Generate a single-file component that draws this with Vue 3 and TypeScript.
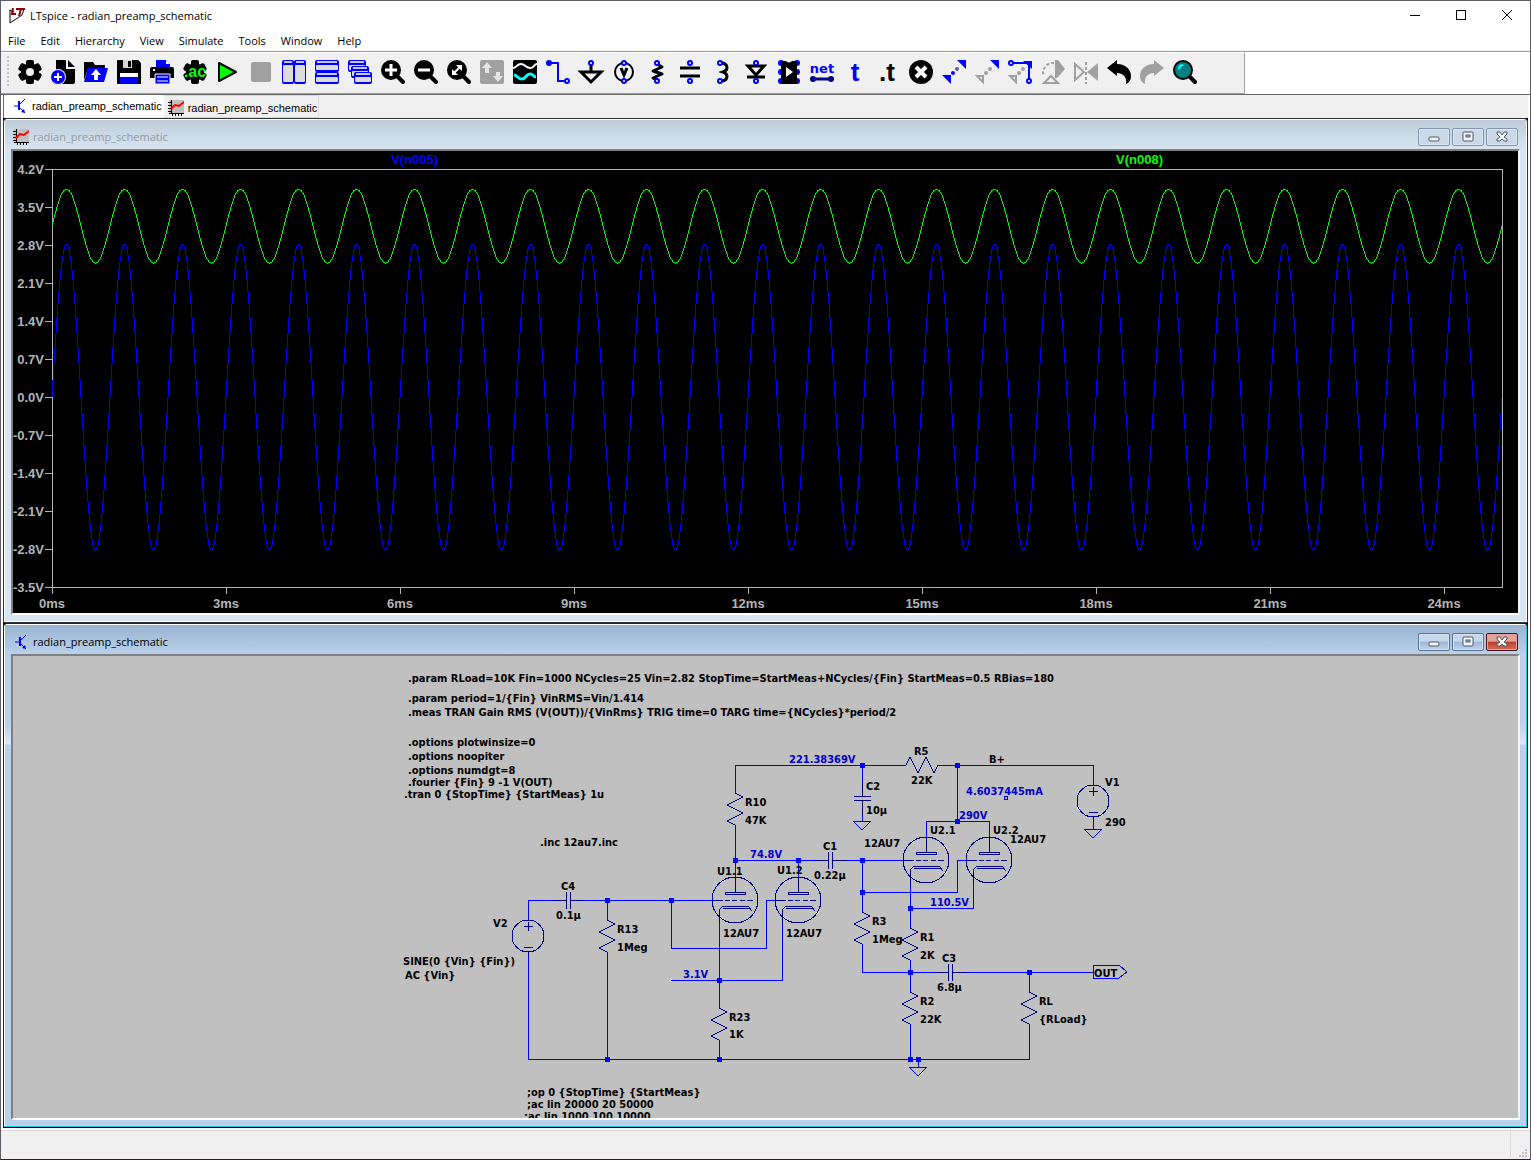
<script setup lang="ts">
import { computed, onBeforeUnmount, onMounted, ref } from 'vue'

interface Tool { name: string; art: string }
interface Label { x: number; y: number; text: string; kind?: string }
type Point = [number, number]

const documentName = 'radian_preamp_schematic'
const menus = ['File', 'Edit', 'Hierarchy', 'View', 'Simulate', 'Tools', 'Window', 'Help']

/* ---------- toolbar artwork, 24x24 grid ---------- */
const B = '#0000ff'
const G = '#a0a0a0'

const gear = `<g fill="#000"><circle cx="12" cy="12" r="9"/>
  <rect x="8" y="0" width="8" height="24" rx="2"/>
  <rect x="8" y="0" width="8" height="24" rx="2" transform="rotate(60 12 12)"/>
  <rect x="8" y="0" width="8" height="24" rx="2" transform="rotate(120 12 12)"/></g>`

const pin = (x: number, y: number) =>
  `<circle cx="${x}" cy="${y}" r="2" fill="#fff" stroke="${B}" stroke-width="2"/>`

const pane = (x: number, y: number, w: number, h: number) =>
  `<rect x="${x}" y="${y}" width="${w}" height="${h}" rx="2" fill="${B}"/>
   <rect x="${x + 2}" y="${y + 1}" width="${w - 4}" height="2" fill="#c8c8ff"/>
   <rect x="${x + 1}" y="${y + 5}" width="${w - 2}" height="${h - 7}" rx="1" fill="#dcdcdc"/>`

const lens = (inner: string) =>
  `<path d="M16 16L22 22" stroke="#000" stroke-width="4" stroke-linecap="round"/>
   <circle cx="10" cy="10" r="10" fill="#000"/>${inner}`

const dots = (first: string, second: string) =>
  `<circle cx="15" cy="9" r="2" fill="${first}"/><circle cx="11" cy="13" r="2" fill="${second}"/>`

const tools: Tool[] = [
  { name: 'Settings', art: `${gear}<circle cx="12" cy="12" r="4" fill="#f0f0f0"/>` },
  { name: 'New schematic', art: `<path d="M5 0H15V9H24V22Q24 24 22 24H5Z" fill="#000"/><path d="M17 0L24 7H17Z" fill="#000"/>
    <circle cx="7" cy="17" r="8" fill="#f0f0f0"/><circle cx="7" cy="17" r="7" fill="${B}"/><path d="M7 13V21M3 17H11" stroke="#fff" stroke-width="2"/>` },
  { name: 'Open', art: `<path d="M0 2H9L11 5H21V9H4L0 20Z" fill="#000"/><path d="M4 8H24L20 22H0Z" fill="${B}"/>
    <path d="M12 9L17 15H14V20H10V15H7Z" fill="#fff"/>` },
  { name: 'Save', art: `<path d="M1 0H21L24 3V24H1Q0 24 0 23V1Q0 0 1 0Z" fill="#000"/><path d="M6 0H15V8H6Z" fill="#d8d8d8"/>
    <path d="M11 1H14V7H11Z" fill="#000"/><path d="M3 13H21V17H3Z" fill="#fff"/><path d="M3 17H21V23H3Z" fill="${B}"/>` },
  { name: 'Print', art: `<path d="M6 0H16L20 4V8H6Z" fill="${B}"/><path d="M16 0V4H20" fill="#fff"/>
    <path d="M2 7H22Q24 7 24 9V18H0V9Q0 7 2 7Z" fill="#000"/><path d="M3 10H5" stroke="#fff" stroke-width="2"/>
    <path d="M5 14H20V24H5Z" fill="${B}" stroke="#f0f0f0"/><path d="M7 17H18M7 21H18" stroke="#fff"/>` },
  { name: 'Configure analysis', art: `${gear}<text x="12" y="17" text-anchor="middle" class="glyph-ac">.ac</text>` },
  { name: 'Run', art: `<path d="M3 3V21L20 12Z" fill="#00ff00" stroke="#000" stroke-width="2" stroke-linejoin="round"/>` },
  { name: 'Stop', art: `<rect x="2" y="2" width="20" height="20" rx="2" fill="${G}"/>` },
  { name: 'Tile vertically', art: pane(0, 0, 12, 24) + pane(12, 0, 12, 24) },
  { name: 'Tile horizontally', art: pane(0, 0, 24, 12) + pane(0, 12, 24, 12) },
  { name: 'Cascade', art: pane(0, 0, 18, 12) + pane(3, 6, 18, 12) + pane(6, 12, 18, 12) },
  { name: 'Zoom in', art: lens('<path d="M10 4V16M4 10H16" stroke="#fff" stroke-width="3"/>') },
  { name: 'Zoom out', art: lens('<path d="M4 10H16" stroke="#fff" stroke-width="3"/>') },
  { name: 'Zoom to fit', art: lens('<path d="M15 5V11L9 5ZM5 15V9L11 15Z" fill="#fff"/><path d="M7 13L13 7" stroke="#fff" stroke-width="2"/>') },
  { name: 'Autorange', art: `<rect width="24" height="24" rx="2" fill="${G}"/><path d="M7 2L12 8H9V13H5V8H2ZM18 22L13 16H16V12H20V16H23Z" fill="#e4e4e4"/>` },
  { name: 'Waveform', art: `<rect width="24" height="24" rx="2" fill="#000"/><path d="M0 8C3 8 4 4 8 4S13 8 17 8 21 4 24 4" fill="none" stroke="#fff" stroke-width="2"/>
    <path d="M1 15C4 15 5 19 9 19S13 14 17 14 20 17 23 17" fill="none" stroke="#00ffff" stroke-width="3"/>` },
  { name: 'Wire', art: `<path d="M3 3H12V21H19" fill="none" stroke="${B}" stroke-width="2"/><circle cx="3" cy="3" r="3" fill="${B}"/>${pin(21, 21)}` },
  { name: 'Ground', art: `<path d="M12 5V12M2 12H22L12 22Z" fill="none" stroke="#000" stroke-width="3"/>${pin(12, 3)}` },
  { name: 'Voltage source', art: `<circle cx="12" cy="12" r="9" fill="none" stroke="#000" stroke-width="2"/><path d="M9 8L12 15L15 8" fill="none" stroke="#000" stroke-width="3"/>${pin(12, 3)}${pin(12, 21)}` },
  { name: 'Resistor', art: `<path d="M12 4L17 7L8 11L17 14L8 18L12 20" fill="none" stroke="#000" stroke-width="3" stroke-linejoin="round"/>${pin(12, 3)}${pin(12, 21)}` },
  { name: 'Capacitor', art: `<path d="M2 8H22M2 16H22" stroke="#000" stroke-width="3"/>${pin(12, 3)}${pin(12, 21)}` },
  { name: 'Inductor', art: `<path d="M10 3C17 3 18 10 12 12C18 14 17 21 10 21M12 12H14" fill="none" stroke="#000" stroke-width="3"/>${pin(9, 3)}${pin(9, 21)}` },
  { name: 'Diode', art: `<path d="M4 6H20L12 15Z" fill="none" stroke="#000" stroke-width="3"/><path d="M3 17H21" stroke="#000" stroke-width="3"/>${pin(12, 3)}${pin(12, 21)}` },
  { name: 'Component', art: `<g fill="${B}"><circle cx="4" cy="3" r="3"/><circle cx="4" cy="12" r="3"/><circle cx="4" cy="21" r="3"/><circle cx="20" cy="3" r="3"/><circle cx="20" cy="12" r="3"/><circle cx="20" cy="21" r="3"/></g>
    <path d="M4 1H9Q12 4 15 1H20V24H4Z" fill="#000"/><path d="M9 7L16 12L9 17Z" fill="#fff"/>` },
  { name: 'Net name', art: `<text x="12" y="13" text-anchor="middle" class="glyph-net">net</text><path d="M3 19H21" stroke="#00008b" stroke-width="3"/><circle cx="3" cy="19" r="3" fill="#00008b"/><circle cx="21" cy="19" r="3" fill="#00008b"/>` },
  { name: 'Text', art: `<text x="12" y="21" text-anchor="middle" class="glyph-t">t</text>` },
  { name: 'SPICE directive', art: `<text x="11" y="21" text-anchor="middle" class="glyph-t dark">.t</text>` },
  { name: 'Delete', art: `<circle cx="12" cy="12" r="12" fill="#000"/><path d="M7 7L17 17M17 7L7 17" stroke="#fff" stroke-width="4"/>` },
  { name: 'Move', art: `<path d="M15 0H24V9ZM0 15H9V24Z" fill="${B}"/>${dots('#6060a0', B)}` },
  { name: 'Duplicate', art: `<path d="M15 0H24V9Z" fill="${B}"/><path d="M2 16H8V22Z" fill="none" stroke="${G}" stroke-width="2"/>${dots(G, G)}` },
  { name: 'Drag', art: `<path d="M2 16H8V22Z" fill="none" stroke="${G}" stroke-width="2"/>${dots(G, G)}<path d="M5 3H21V19" fill="none" stroke="${B}" stroke-width="2"/><path d="M15 1H24V9Z" fill="${B}"/>${pin(3, 3)}${pin(21, 21)}` },
  { name: 'Rotate', art: `<path d="M14 0H17L24 9L16 18H14Z" fill="${G}"/><path d="M13 3A10 10 0 0 0 2 13V16" fill="none" stroke="${G}" stroke-width="2" stroke-dasharray="3 2"/><path d="M3 23L10 16L17 23Z" fill="none" stroke="${G}" stroke-width="2"/>` },
  { name: 'Mirror', art: `<path d="M24 3V21L13 12Z" fill="${G}"/><path d="M1 4V20L10 12Z" fill="none" stroke="${G}" stroke-width="2"/><path d="M12 2V24" stroke="${G}" stroke-width="2" stroke-dasharray="3 2"/>` },
  { name: 'Undo', art: `<path d="M0 8L10 0V4C19 4 24 10 24 16Q24 22 19 24C20 18 17 13 10 13V16Z" fill="#000"/>` },
  { name: 'Redo', art: `<path d="M24 8L14 0V4C5 4 0 10 0 16Q0 22 5 24C4 18 7 13 14 13V16Z" fill="${G}"/>` },
  { name: 'Find', art: `<path d="M17 17L22 22" stroke="#000" stroke-width="4" stroke-linecap="round"/><circle cx="10" cy="10" r="9" fill="#008080" stroke="#000" stroke-width="2"/><path d="M5 9Q5 5 9 4L11 5Q7 7 6 10Z" fill="#00ffff"/>` },
]

const captionArt = {
  plot: `<rect x="1" width="15" height="14" fill="#c0c0c0"/><path d="M3 0V14M1 13H16M0 2H3M0 5H3M0 8H3M0 11H3M4 13V16M7 13V16M10 13V16M13 13V16" stroke="#000" shape-rendering="crispEdges"/><path d="M3 9L7 5L11 6L16 2" fill="none" stroke="#f00" stroke-width="2"/>`,
  schematic: `<path d="M2 8H7M7 7L13 1M7 9L13 15" fill="none" stroke="#00f"/><path d="M7 3V12" stroke="#00f" stroke-width="2"/><path d="M13 15L9 14L12 11Z" fill="#00f"/>`,
}

/* ---------- waveform plot ---------- */
let plotHost: HTMLElement | null = null
const keepPlotHost = (el: unknown) => { plotHost = el as HTMLElement | null }
const plotSize = ref({ width: 1505, height: 462 })
const margin = { left: 39, top: 18, right: 15, bottom: 26 }
const volts = { min: -3.5, max: 4.2, step: 0.7 }
const time = { end: 25, step: 3 }

const right = computed(() => plotSize.value.width - margin.right - 1)
const bottom = computed(() => plotSize.value.height - margin.bottom)
const toX = (ms: number) => margin.left + (ms / time.end) * (right.value - margin.left)
const toY = (v: number) => margin.top + ((volts.max - v) / (volts.max - volts.min)) * (bottom.value - margin.top)

const yTicks = computed(() =>
  Array.from({ length: 12 }, (_, i) => {
    const v = volts.max - i * volts.step
    return { y: Math.round(toY(v)), text: `${(Math.round(v * 10) / 10 || 0).toFixed(1)}V` }
  }))
const xTicks = computed(() =>
  Array.from({ length: 9 }, (_, i) => ({ x: Math.round(toX(i * time.step)), text: `${i * time.step}ms` })))

const trace = (mean: number, amplitude: number) => {
  const points: string[] = []
  for (let x = margin.left; x <= right.value; x += 1) {
    const ms = ((x - margin.left) / (right.value - margin.left)) * time.end
    points.push(`${x},${Math.round(toY(mean + amplitude * Math.sin(2 * Math.PI * ms)))}`)
  }
  return points.join(' ')
}
const traces = computed(() => [
  { name: 'V(n005)', color: '#0000ff', at: 0.25, points: trace(0, 2.82) },
  { name: 'V(n008)', color: '#00ff00', at: 0.75, points: trace(3.15, 0.68) },
])

let observer: ResizeObserver | undefined
onMounted(() => {
  if (!plotHost) return
  observer = new ResizeObserver(([entry]) => {
    plotSize.value = { width: Math.round(entry.contentRect.width), height: Math.round(entry.contentRect.height) }
  })
  observer.observe(plotHost)
})
onBeforeUnmount(() => observer?.disconnect())

/* ---------- schematic sheet ---------- */
const sheetOrigin = 'translate(-13 -656)'

const wires: string[] = [
  'M735 793V765H906', 'M938 765H1093V785', 'M862 765V782', 'M862 815V821', 'M957 765V821', 'M926 837V821H989V837',
  'M735 825V877', 'M735 860H815', 'M798 860V877', 'M846 860H903', 'M862 860V912', 'M862 892H957V860H966',
  'M862 944V972H935', 'M910 883V928', 'M910 908H973V883', 'M910 960V992', 'M965 972H1093', 'M1029 972V992',
  'M1029 1024V1059H528V952', 'M910 1024V1059', 'M918 1059V1067', 'M528 920V900H553', 'M583 900H712', 'M607 900V920',
  'M607 952V1059', 'M671 900V948H766V900H775', 'M719 923V1008', 'M671 980H782V923', 'M719 1040V1059', 'M1093 820V829',
  'M853 821H871L862 830Z', 'M1084 829H1102L1093 838Z', 'M909 1067H927L918 1076Z',
  'M1093 965H1119L1127 972L1119 978H1093Z', 'M1004 796H1007V799H1004Z',
]

const zigzag = (x: number, y: number) => `M${x} ${y}l8 4l-16 8l16 8l-16 8l8 4`
const capacitor = (x: number, y: number) =>
  `M${x - 15} ${y}h13M${x - 2} ${y - 8}v17M${x + 2} ${y - 8}v17M${x + 2} ${y}h14`
const source = (x: number, y: number) =>
  `M${x - 16} ${y}a16 16 0 1 0 32 0a16 16 0 1 0 -32 0M${x - 4} ${y - 10}h9M${x} ${y - 14}v9M${x - 4} ${y + 11}h9M${x} ${y + 16}v4`
const triode = (x: number, y: number) =>
  `M${x - 23} ${y}a23 23 0 1 0 46 0a23 23 0 1 0 -46 0M${x} ${y - 23}v15M${x - 10} ${y - 8}h20v2h-20z` +
  `M${x - 23} ${y}h11M${x - 10} ${y}h5M${x - 3} ${y}h5M${x + 5} ${y}h5M${x + 12} ${y}h6` +
  `M${x + 17} ${y + 11}l-4 -5h-25l-4 4v13M${x - 12} ${y + 8}h26`

const parts: string[] = [
  zigzag(735, 793), zigzag(862, 912), zigzag(910, 928), zigzag(910, 992), zigzag(1029, 992), zigzag(719, 1008), zigzag(607, 920),
  'M906 765l4 -8l8 16l8 -16l8 16l4 -8',
  capacitor(830, 860), capacitor(950, 972), capacitor(568, 900),
  'M862 782V796M854 796H871M854 800H871M862 800V815',
  source(528, 936), source(1093, 801),
  triode(735, 900), triode(798, 900), triode(926, 860), triode(989, 860),
]

const junctions: Point[] = [
  [862, 765], [957, 765], [957, 821], [735, 860], [798, 860], [862, 860], [862, 892], [910, 908], [910, 972],
  [1029, 972], [607, 900], [671, 900], [719, 980], [607, 1059], [719, 1059], [910, 1059], [918, 1059],
]

const labels: Label[] = [
  { x: 408, y: 682, text: '.param RLoad=10K Fin=1000 NCycles=25 Vin=2.82 StopTime=StartMeas+NCycles/{Fin} StartMeas=0.5 RBias=180' },
  { x: 408, y: 702, text: '.param period=1/{Fin} VinRMS=Vin/1.414' },
  { x: 408, y: 716, text: '.meas TRAN Gain RMS (V(OUT))/{VinRms} TRIG time=0 TARG time={NCycles}*period/2' },
  { x: 408, y: 746, text: '.options plotwinsize=0' },
  { x: 408, y: 760, text: '.options noopiter' },
  { x: 408, y: 774, text: '.options numdgt=8' },
  { x: 408, y: 786, text: '.fourier {Fin} 9 -1 V(OUT)' },
  { x: 404, y: 798, text: '.tran 0 {StopTime} {StartMeas} 1u' },
  { x: 540, y: 846, text: '.inc 12au7.inc' },
  { x: 789, y: 763, text: '221.38369V', kind: 'probe' },
  { x: 966, y: 795, text: '4.6037445mA', kind: 'probe' },
  { x: 959, y: 819, text: '290V', kind: 'probe' },
  { x: 750, y: 858, text: '74.8V', kind: 'probe' },
  { x: 930, y: 906, text: '110.5V', kind: 'probe' },
  { x: 683, y: 978, text: '3.1V', kind: 'probe' },
  { x: 745, y: 806, text: 'R10' }, { x: 745, y: 824, text: '47K' },
  { x: 914, y: 755, text: 'R5' }, { x: 911, y: 784, text: '22K' },
  { x: 866, y: 790, text: 'C2' }, { x: 866, y: 814, text: '10µ' },
  { x: 989, y: 763, text: 'B+' },
  { x: 1105, y: 786, text: 'V1' }, { x: 1105, y: 826, text: '290' },
  { x: 930, y: 834, text: 'U2.1' }, { x: 864, y: 847, text: '12AU7' },
  { x: 993, y: 834, text: 'U2.2' }, { x: 1010, y: 843, text: '12AU7' },
  { x: 823, y: 850, text: 'C1' }, { x: 814, y: 879, text: '0.22µ' },
  { x: 717, y: 875, text: 'U1.1' }, { x: 723, y: 937, text: '12AU7' },
  { x: 777, y: 874, text: 'U1.2' }, { x: 786, y: 937, text: '12AU7' },
  { x: 872, y: 925, text: 'R3' }, { x: 872, y: 943, text: '1Meg' },
  { x: 920, y: 941, text: 'R1' }, { x: 920, y: 959, text: '2K' },
  { x: 942, y: 962, text: 'C3' }, { x: 937, y: 991, text: '6.8µ' },
  { x: 920, y: 1005, text: 'R2' }, { x: 920, y: 1023, text: '22K' },
  { x: 1039, y: 1005, text: 'RL' }, { x: 1039, y: 1023, text: '{RLoad}' },
  { x: 1094, y: 977, text: 'OUT' },
  { x: 561, y: 890, text: 'C4' }, { x: 556, y: 919, text: '0.1µ' },
  { x: 617, y: 933, text: 'R13' }, { x: 617, y: 951, text: '1Meg' },
  { x: 493, y: 927, text: 'V2' },
  { x: 403, y: 965, text: 'SINE(0 {Vin} {Fin})' }, { x: 405, y: 979, text: 'AC {Vin}' },
  { x: 729, y: 1021, text: 'R23' }, { x: 729, y: 1038, text: '1K' },
  { x: 527, y: 1096, text: ';op 0 {StopTime} {StartMeas}' },
  { x: 527, y: 1108, text: ';ac lin 20000 20 50000' },
  { x: 524, y: 1120, text: ';ac lin 1000 100 10000' },
]

const children = [
  { id: 'plot', active: false, art: captionArt.plot },
  { id: 'schematic', active: true, art: captionArt.schematic },
]
</script>

<template>
  <div class="app">
    <header class="titlebar">
      <svg class="app-icon" viewBox="0 0 16 16" width="16" height="16" aria-hidden="true">
        <path d="M1 15V2L5 4M1 15L13 7L15 1" fill="none" stroke="#000" />
        <path d="M4 0L3 6H7" fill="none" stroke="#8b0000" stroke-width="2" />
        <path d="M7 1H16M12 1L10 8" fill="none" stroke="#8b0000" stroke-width="2" />
      </svg>
      <h1>LTspice - {{ documentName }}</h1>
      <div class="window-controls">
        <button type="button" aria-label="Minimize"><svg width="10" height="10"><path d="M0 5H10" /></svg></button>
        <button type="button" aria-label="Maximize"><svg width="10" height="10"><rect width="9" height="9" /></svg></button>
        <button type="button" aria-label="Close"><svg width="10" height="10"><path d="M0 0L10 10M10 0L0 10" class="smooth" /></svg></button>
      </div>
    </header>

    <nav class="menubar" aria-label="Main menu">
      <button v-for="menu in menus" :key="menu" type="button">{{ menu }}</button>
    </nav>

    <div class="rebar">
      <div class="toolbar" role="toolbar" aria-label="Tools">
        <span class="grip"></span>
        <button v-for="tool in tools" :key="tool.name" type="button" :aria-label="tool.name">
          <svg viewBox="0 0 24 24" width="24" height="24" v-html="tool.art"></svg>
        </button>
      </div>
    </div>

    <div class="tabs" role="tablist">
      <button type="button" role="tab" aria-selected="true" class="tab selected">
        <svg viewBox="0 0 16 16" width="16" height="16" v-html="captionArt.schematic"></svg>{{ documentName }}
      </button>
      <button type="button" role="tab" aria-selected="false" class="tab">
        <svg viewBox="0 0 16 16" width="16" height="16" v-html="captionArt.plot"></svg>{{ documentName }}
      </button>
    </div>

    <main class="workspace">
      <section v-for="child in children" :key="child.id" class="child" :class="{ active: child.active }">
        <header class="caption">
          <svg viewBox="0 0 16 16" width="16" height="16" v-html="child.art"></svg>
          <h2>{{ documentName }}</h2>
          <div class="caption-buttons">
            <button type="button" aria-label="Minimize">
              <svg width="12" height="12"><rect x="1" y="6" width="10" height="4" rx="1" /></svg>
            </button>
            <button type="button" aria-label="Restore">
              <svg width="12" height="12"><rect x="1" y="1" width="10" height="9" rx="1" /><rect x="4" y="4" width="4" height="2" class="hole" /></svg>
            </button>
            <button type="button" aria-label="Close" class="close">
              <svg width="12" height="12"><path d="M1 1H4L6 4L8 1H11V3L8 6L11 8V10H8L6 8L4 10H1V8L4 6L1 3Z" /></svg>
            </button>
          </div>
        </header>

        <div v-if="child.id === 'plot'" class="client plot">
          <div :ref="keepPlotHost" class="plot-host">
            <svg class="canvas" role="img" aria-label="Transient analysis waveforms">
              <g class="axes">
                <rect :x="margin.left" :y="margin.top" :width="right - margin.left" :height="bottom - margin.top" />
                <path v-for="t in yTicks" :key="t.text" :d="`M${margin.left - 7} ${t.y}h7`" />
                <path v-for="t in xTicks" :key="t.text" :d="`M${t.x} ${bottom}v7`" />
              </g>
              <polyline v-for="t in traces" :key="t.name" class="trace" :points="t.points" :stroke="t.color" />
              <g class="scale">
                <text v-for="t in yTicks" :key="t.text" :x="margin.left - 8" :y="t.y + 5" text-anchor="end">{{ t.text }}</text>
                <text v-for="t in xTicks" :key="t.text" :x="t.x" :y="bottom + 21" text-anchor="middle">{{ t.text }}</text>
                <text v-for="t in traces" :key="t.name" :x="toX(time.end * t.at)" y="13" text-anchor="middle" :fill="t.color">{{ t.name }}</text>
              </g>
            </svg>
          </div>
        </div>

        <div v-else class="client sheet">
          <svg class="canvas" role="img" aria-label="Preamp schematic">
            <g :transform="sheetOrigin">
              <path v-for="d in wires" :key="d" class="wire" :d="d" />
              <path v-for="d in parts" :key="d" class="part" :d="d" />
              <rect v-for="[x, y] in junctions" :key="`${x}-${y}`" class="junction" :x="x - 2" :y="y - 2" width="5" height="5" />
              <text v-for="l in labels" :key="`${l.x}-${l.y}`" :x="l.x" :y="l.y" :class="l.kind">{{ l.text }}</text>
            </g>
          </svg>
        </div>
      </section>
    </main>

    <footer class="statusbar">
      <span class="status-text"></span>
      <svg class="size-grip" width="12" height="12" viewBox="0 0 12 12" aria-hidden="true">
        <path d="M8 2h2v2h-2zM5 5h2v2h-2zM8 5h2v2h-2zM2 8h2v2h-2zM5 8h2v2h-2zM8 8h2v2h-2z" />
      </svg>
    </footer>
  </div>
</template>

<style>
body { margin: 0; background: #fff; }
</style>

<style scoped>
* { box-sizing: border-box; }
.app {
  display: flex;
  flex-direction: column;
  height: 100vh;
  min-height: 600px;
  overflow: hidden;
  border: 1px solid #5f5c66;
  border-bottom-color: #231f2b;
  background: #fff;
  font: 11px/16px "Open Sans", "Noto Sans", sans-serif;
  color: #000;
}
button {
  margin: 0;
  padding: 0;
  border: 0;
  background: none;
  font: inherit;
  color: inherit;
}
h1, h2 { margin: 0; font: inherit; }
svg { display: block; flex: none; }

.titlebar { display: flex; align-items: center; flex: none; height: 30px; padding-left: 8px; }
.app-icon { margin-right: 5px; }
.titlebar h1 { flex: 1; }
.window-controls { display: flex; align-self: flex-start; }
.window-controls button { display: flex; justify-content: center; align-items: center; width: 46px; height: 28px; }
.window-controls svg { overflow: visible; fill: none; stroke: #000; shape-rendering: crispEdges; }
.smooth { shape-rendering: auto; }

.menubar { display: flex; align-items: center; gap: 1px; flex: none; height: 20px; border-bottom: 1px solid #f0f0f0; }
.menubar button { padding: 0 7px; }

.rebar {
  display: flex;
  flex: none;
  height: 44px;
  border-top: 1px solid #a0a0a0;
  border-bottom: 1px solid #696969;
}
.toolbar {
  display: flex;
  align-items: center;
  height: 42px;
  padding: 0 43px 2px 0;
  border-top: 1px solid #fff;
  border-right: 1px solid #a0a0a0;
  border-bottom: 1px solid #a0a0a0;
  background: #f0f0f0;
}
.toolbar button { display: flex; justify-content: center; width: 33px; }
.toolbar svg { overflow: visible; }
.grip {
  width: 2px;
  height: 32px;
  margin: 0 4px 0 6px;
  background: repeating-linear-gradient(#c4c4c4 0 2px, #f0f0f0 2px 4px);
}
.toolbar :deep(.glyph-ac) { font: 700 16px "Liberation Sans", sans-serif; fill: #00ff00; }
.toolbar :deep(.glyph-net) { font: 700 13px "DejaVu Sans", sans-serif; fill: #0000ff; }
.toolbar :deep(.glyph-t) { font: 700 26px "Liberation Sans", sans-serif; fill: #0000ff; }
.toolbar :deep(.dark) { fill: #000; }

.tabs {
  display: flex;
  align-items: flex-start;
  flex: none;
  height: 23px;
  margin: 0 2px;
  border-left: 1px solid #696969;
  background: #f0f0f0;
  font: 11px/16px "Liberation Sans", sans-serif;
}
.tab { display: flex; align-items: center; height: 23px; padding: 2px 1px 0 4px; border: 1px solid #d9d9d9; border-left: 0; }
.tab svg { margin-right: 4px; }
.tab.selected { height: 22px; padding: 0 1px 0 8px; border-color: #fff; background: #fff; }

.workspace { display: flex; flex-direction: column; flex: 1; min-height: 0; margin: 0 2px; background: #000; }
.child {
  display: flex;
  flex-direction: column;
  flex: 1 1 0;
  min-height: 0;
  padding: 0 6px 7px;
  border: 1px solid #333;
  border-radius: 4px 4px 0 0;
  background: #d7e4f2;
  box-shadow: inset 0 0 0 1px #fff;
}
.child.active {
  border-color: #222 #000 #000 #222;
  background: linear-gradient(#99b4d1, #b9d1ea 30px, #b9d1ea 100px, #dbe8f7 120px, #b9d1ea 121px);
  box-shadow: inset -1px -1px 0 #28c8e8, inset 1px 1px 0 #fff;
}
.caption {
  display: flex;
  align-items: center;
  flex: none;
  height: 29px;
  margin: 1px -5px 0;
  padding: 5px 8px 0;
  background: linear-gradient(#bfcddb, #d7e4f2);
  color: #939aa5;
  line-height: 18px;
}
.active .caption { background: linear-gradient(#99b4d1, #b9d1ea); color: #000; }
.caption h2 { flex: 1; margin-left: 4px; }
.caption-buttons { display: flex; gap: 2px; }
.caption-buttons button {
  display: flex;
  align-items: center;
  justify-content: center;
  width: 32px;
  height: 18px;
  border: 1px solid #8593ad;
  border-radius: 2px;
  background: #cbd8e7;
  box-shadow: inset 0 0 0 1px #dbe5f1;
}
.caption-buttons svg { fill: #f4f4f4; stroke: #53586a; }
.caption-buttons .hole { fill: #a9bed6; }
.active .caption-buttons button {
  border-color: #5d7391;
  background: linear-gradient(#c5d7ea 0 45%, #9cb8d6 50%, #bdd4ec);
  box-shadow: inset 0 0 0 1px #d3e2f2;
}
.active .caption-buttons .close {
  border-color: #4a1420;
  background: linear-gradient(#e3a295 0 45%, #b8402a 50%, #d3705a);
  box-shadow: inset 0 0 0 1px #e0a598;
}

.client {
  flex: 1;
  min-height: 0;
  margin: 0 1px;
  border: 2px solid;
  border-color: #808080 #f4f4f4 #fff #808080;
}
.plot { background: #000; }
.sheet { background: #c0c0c0; }
.plot-host { height: 100%; }
.canvas { width: 100%; height: 100%; overflow: hidden; }
.axes { fill: none; stroke: #b4b4b4; shape-rendering: crispEdges; }
.trace { fill: none; stroke-width: 1; shape-rendering: crispEdges; }
.scale { font: 700 13px "Liberation Sans", sans-serif; }
.scale text:not([fill]) { fill: #b4b4b4; }

.wire { fill: none; stroke: #0000ff; shape-rendering: crispEdges; }
.part { fill: none; stroke: #000080; shape-rendering: crispEdges; }
.junction { fill: #0000ff; }
.sheet text { font: 700 11px "DejaVu Sans Condensed", "DejaVu Sans", sans-serif; fill: #000; }
.sheet text.probe { fill: #0000c8; }

.statusbar {
  display: flex;
  justify-content: flex-end;
  flex: none;
  height: 31px;
  border-top: 2px solid #fff;
  background: #f0f0f0;
  box-shadow: inset 0 1px 0 #d7d7d7;
}
.status-text { flex: 1; margin: 3px 0 2px; border-right: 1px solid #d7d7d7; }
.size-grip { align-self: flex-end; margin: 0 1px 0 6px; fill: #bfbfbf; }
</style>
